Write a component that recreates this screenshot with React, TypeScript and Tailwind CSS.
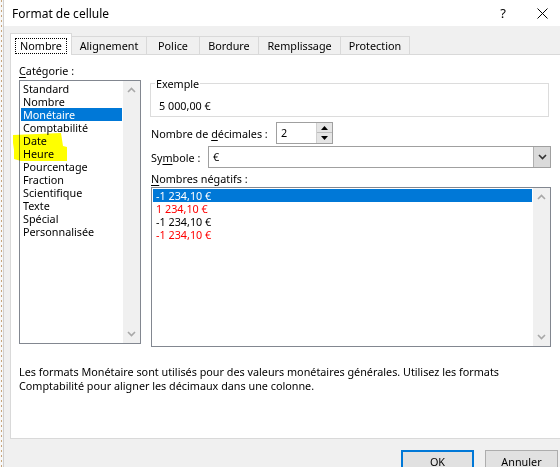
import React from "react";

const font = { fontFamily: '"Noto Sans", "Open Sans", sans-serif' };

function ChevronUp() {
  return (
    <svg width="9" height="6" viewBox="0 0 9 6">
      <path d="M1 5 L4.5 1.5 L8 5" fill="none" stroke="#a8a8a8" strokeWidth="1.6" />
    </svg>
  );
}
function ChevronDown({ color = "#a8a8a8" }: { color?: string }) {
  return (
    <svg width="9" height="6" viewBox="0 0 9 6">
      <path d="M1 1 L4.5 4.5 L8 1" fill="none" stroke={color} strokeWidth="1.6" />
    </svg>
  );
}

function ScrollBar() {
  return (
    <div className="w-[17px] bg-[#f0f0f0] flex flex-col justify-between items-center py-[6px]">
      <ChevronUp />
      <ChevronDown />
    </div>
  );
}

const categories = [
  "Standard",
  "Nombre",
  "Monétaire",
  "Comptabilité",
  "Date",
  "Heure",
  "Pourcentage",
  "Fraction",
  "Scientifique",
  "Texte",
  "Spécial",
  "Personnalisée",
];

const negatives: { t: string; c: string }[] = [
  { t: "-1 234,10 €", c: "sel" },
  { t: "1 234,10 €", c: "text-[#ff0000]" },
  { t: "-1 234,10 €", c: "text-black" },
  { t: "-1 234,10 €", c: "text-[#ff0000]" },
];

const tabs = [
  { label: "Alignement", w: "w-[76px]" },
  { label: "Police", w: "w-[54px]" },
  { label: "Bordure", w: "w-[60px]" },
  { label: "Remplissage", w: "w-[83px]" },
  { label: "Protection", w: "w-[70px]" },
];

export default function App() {
  return (
    <div
      className="relative w-[560px] h-[467px] overflow-hidden flex bg-white text-[10.8px] text-black"
      style={font}
    >
      {/* background sheet strip */}
      <div className="w-[3px] h-full bg-[#f7f7f7] flex justify-start pl-[1px]">
        <div className="w-[1px] h-full bg-[repeating-linear-gradient(to_bottom,#c9a57a_0px,#c9a57a_2px,transparent_2px,transparent_5px)]" />
      </div>
      {/* window */}
      <div className="flex-1 flex flex-col border-l border-[#d0d0d0] min-w-0">
        {/* title bar */}
        <div className="h-[26px] bg-white flex items-center pl-[8px] shrink-0">
          <span className="text-[12px] leading-none flex-1 pt-[1px]">Format de cellule</span>
          <span className="text-[13px] leading-none w-[20px] text-center mr-[24px]">?</span>
          <svg width="11" height="11" viewBox="0 0 11 11" className="mr-[12px]">
            <path d="M0.5 0.5 L10.5 10.5 M10.5 0.5 L0.5 10.5" stroke="#000" strokeWidth="1" />
          </svg>
        </div>
        {/* body */}
        <div className="flex-1 bg-[#f0f0f0] flex flex-col pl-[6px] pt-[7px]">
          {/* tabs */}
          <div className="flex items-end h-[21px] relative z-10">
            <div className="w-[62px] h-[22px] -mb-[1px] bg-white border-t border-l border-r border-[#d9d9d9] flex items-start justify-center pt-[4px]">
              <span className="border border-dotted border-black px-[4px] h-[16px] w-[52px] flex items-center justify-center leading-none">
                Nombre
              </span>
            </div>
            {tabs.map((t) => (
              <div
                key={t.label}
                className={`${t.w} h-[18px] -ml-[1px] border-t border-l border-r border-[#d9d9d9] flex items-center justify-center leading-none pt-[1px]`}
              >
                {t.label}
              </div>
            ))}
          </div>
          {/* panel */}
          <div className="h-[385px] -mr-[20px] bg-white border border-[#d9d9d9] flex flex-col pl-[8px] shrink-0">
            <div className="flex items-start">
              {/* left column */}
              <div className="w-[122px] flex flex-col pt-[9px]">
                <div className="h-[13px] leading-[13px]">
                  <span className="underline underline-offset-2">C</span>atégorie :
                </div>
                <div className="mt-[3px] h-[264px] border border-[#828790] bg-white flex">
                  <div className="flex-1 flex flex-col pt-[1px] px-[1px]">
                    {categories.map((c) => (
                      <div
                        key={c}
                        className={`h-[13px] leading-[13px] pl-[2px] ${
                          c === "Monétaire" ? "bg-[#0078d7] text-white" : ""
                        }`}
                      >
                        {c}
                      </div>
                    ))}
                  </div>
                  <ScrollBar />
                </div>
              </div>
              {/* right column */}
              <div className="w-[401px] ml-[9px] flex flex-col pt-[28px]">
                <div className="relative h-[34px] mr-[2px] border border-[#dcdcdc] flex items-end pl-[8px] pb-[4px]">
                  <span className="absolute -top-[7px] left-[4px] bg-white px-[1px] leading-[13px]">
                    Exemple
                  </span>
                  <span className="leading-[13px]">5 000,00 €</span>
                </div>
                <div className="flex items-center mt-[5px] pl-[1px]">
                  <span className="w-[125px] leading-[13px]">
                    Nombre de <span className="underline underline-offset-2">d</span>écimales :
                  </span>
                  <div className="w-[57px] h-[22px] border border-[#a0a0a0] bg-white flex items-center">
                    <span className="flex-1 pl-[4px] leading-none">2</span>
                    <div className="w-[16px] h-[20px] flex flex-col border-l border-[#d0d0d0]">
                      <div className="h-[10px] bg-[#e5e5e5] border-b border-[#bdbdbd] flex items-center justify-center">
                        <svg width="7" height="4" viewBox="0 0 7 4">
                          <path d="M0 4 L3.5 0 L7 4 Z" fill="#000" />
                        </svg>
                      </div>
                      <div className="h-[10px] bg-[#e5e5e5] flex items-center justify-center">
                        <svg width="7" height="4" viewBox="0 0 7 4">
                          <path d="M0 0 L3.5 4 L7 0 Z" fill="#000" />
                        </svg>
                      </div>
                    </div>
                  </div>
                </div>
                <div className="flex items-center mt-[2px] pl-[1px]">
                  <span className="w-[57px] leading-[13px]">
                    Sy<span className="underline underline-offset-2">m</span>bole :
                  </span>
                  <div className="flex-1 h-[22px] border border-[#a0a0a0] bg-white flex items-stretch">
                    <span className="flex-1 pl-[4px] flex items-center leading-none">€</span>
                    <div className="w-[17px] bg-[#dadada] border-l border-[#b0b0b0] flex items-center justify-center">
                      <ChevronDown color="#333" />
                    </div>
                  </div>
                </div>
                <div className="mt-[4px] pl-[1px] h-[13px] leading-[13px]">
                  <span className="underline underline-offset-2">N</span>ombres négatifs :
                </div>
                <div className="mt-[2px] ml-[1px] h-[160px] border border-[#828790] bg-white flex">
                  <div className="flex-1 flex flex-col pt-[1px] px-[1px]">
                    {negatives.map((n, i) => (
                      <div
                        key={i}
                        className={`h-[13px] leading-[13px] pl-[3px] ${
                          n.c === "sel" ? "bg-[#0078d7] text-white" : n.c
                        }`}
                      >
                        {n.t}
                      </div>
                    ))}
                  </div>
                  <ScrollBar />
                </div>
              </div>
            </div>
            <div className="mt-[18px] leading-[14px]">
              Les formats Monétaire sont utilisés pour des valeurs monétaires générales. Utilisez les formats
              <br />
              Comptabilité pour aligner les décimaux dans une colonne.
            </div>
          </div>
          {/* buttons */}
          <div className="flex justify-end gap-[11px] pt-[11px] pr-[2px]">
            <div className="w-[73px] h-[24px] bg-[#e1e1e1] border-2 border-[#0078d7] flex items-center justify-center leading-none">
              OK
            </div>
            <div className="w-[73px] h-[24px] bg-[#e1e1e1] border border-[#adadad] flex items-center justify-center leading-none">
              Annuler
            </div>
          </div>
        </div>
      </div>
      {/* yellow highlighter marks */}
      <svg
        className="absolute left-0 top-0 mix-blend-multiply pointer-events-none"
        width="560"
        height="467"
      >
        <path
          d="M13 135 L61 133 L63 146 L67 147 L67 161 L21 161 L14 159 L14 150 L13 143 Z"
          fill="#ffff00"
        />
      </svg>
    </div>
  );
}
